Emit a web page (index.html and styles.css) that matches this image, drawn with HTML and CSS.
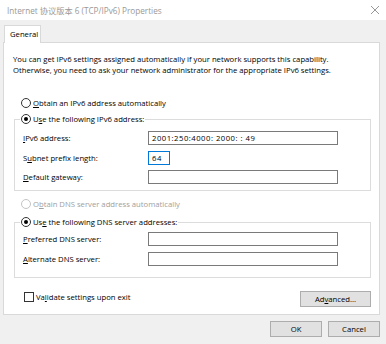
FILE: index.html
```html
<!DOCTYPE html>
<html lang="en">
<head>
  <meta charset="UTF-8" />
  <title>Internet 协议版本 6 (TCP/IPv6) Properties</title>
  <link rel="stylesheet" href="styles.css">
</head>
<body>
  <div class="window">
    <div class="titlebar">
      <span class="title">Internet 协议版本 6 (TCP/IPv6) Properties</span>
      <svg class="close" width="10" height="10" viewBox="0 0 10 10">
        <path d="M1 1 L9 9 M9 1 L1 9" stroke="#8c8c8c" stroke-width="0.9" fill="none"/>
      </svg>
    </div>

    <div class="tabs">
      <div class="tab">General</div>
    </div>

    <div class="pane">
      <p class="intro">
        You can get IPv6 settings assigned automatically if your network supports this capability.<br>
        Otherwise, you need to ask your network administrator for the appropriate IPv6 settings.
      </p>

      <label class="radio first"><span class="circle"></span><span><u>O</u>btain an IPv6 address automatically</span></label>

      <fieldset class="group">
        <legend><label class="radio"><span class="circle on"></span><span>U<u>s</u>e the following IPv6 address:</span></label></legend>
        <div class="row">
          <span class="lbl"><u>I</u>Pv6 address:</span>
          <input class="field" type="text" value="2001:250:4000: 2000: : 49">
        </div>
        <div class="row">
          <span class="lbl">S<u>u</u>bnet prefix length:</span>
          <input class="field short focus" type="text" value="64">
        </div>
        <div class="row">
          <span class="lbl"><u>D</u>efault gateway:</span>
          <input class="field" type="text" value="">
        </div>
      </fieldset>

      <label class="radio disabled second"><span class="circle"></span><span>O<u>b</u>tain DNS server address automatically</span></label>

      <fieldset class="group dns">
        <legend><label class="radio"><span class="circle on"></span><span>Us<u>e</u> the following DNS server addresses:</span></label></legend>
        <div class="row">
          <span class="lbl"><u>P</u>referred DNS server:</span>
          <input class="field" type="text" value="">
        </div>
        <div class="row">
          <span class="lbl"><u>A</u>lternate DNS server:</span>
          <input class="field" type="text" value="">
        </div>
      </fieldset>

      <div class="bottom">
        <label class="check"><span class="box"></span><span>Va<u>l</u>idate settings upon exit</span></label>
        <button class="btn advanced">Ad<u>v</u>anced...</button>
      </div>
    </div>

    <div class="actions">
      <button class="btn">OK</button>
      <button class="btn">Cancel</button>
    </div>
  </div>
</body>
</html>
```

FILE: styles.css
```css
body {
  margin: 0;
  font-family: "Open Sans", "Noto Sans CJK SC", sans-serif;
  font-size: 7.7px;
  color: #000;
  background: #f0f0f0;
}

.window {
  width: 386px;
  height: 344px;
  background: #f0f0f0;
  overflow: hidden;
}

.titlebar {
  height: 20px;
  background: #fff;
  display: flex;
  align-items: center;
  justify-content: space-between;
  padding: 0 6px 0 7px;
}

.title {
  color: #999;
  font-size: 8.2px;
}

.tabs {
  display: flex;
  padding: 5px 0 0 4px;
  height: 17px;
}

.tab {
  width: 37px;
  height: 18px;
  box-sizing: border-box;
  background: #fff;
  border: 1px solid #d9d9d9;
  border-bottom: none;
  padding: 3px 0 0 5px;
  position: relative;
  z-index: 1;
}

.pane {
  margin: 0 6px 0 3px;
  height: 273px;
  box-sizing: border-box;
  background: #fff;
  border: 1px solid #d9d9d9;
  padding: 11px 8px 0 10px;
}

.intro {
  margin: 0 0 21px -1px;
  line-height: 11px;
}

.radio {
  display: flex;
  align-items: center;
  gap: 2px;
  height: 12px;
}

.radio.first {
  margin-left: 7px;
  margin-bottom: 4px;
}

.radio.second {
  margin: 7px 0 6px 7px;
}

.circle {
  width: 8px;
  height: 8px;
  border: 1px solid #333;
  border-radius: 50%;
  display: flex;
  align-items: center;
  justify-content: center;
}

.circle.on::after {
  content: "";
  width: 4px;
  height: 4px;
  border-radius: 50%;
  background: #000;
}

.disabled {
  color: #a0a0a0;
}

.disabled .circle {
  border-color: #c4c4c4;
}

.group {
  margin: 0;
  border: 1px solid #dcdcdc;
  padding: 6px 0 6px 8px;
}

.group legend {
  padding: 0 1px;
  margin-left: -3px;
}

.group.dns {
  padding-top: 4px;
  padding-bottom: 5px;
}

.row {
  display: flex;
  align-items: center;
  height: 14px;
  margin-bottom: 5.5px;
}

.row:last-child {
  margin-bottom: 0;
}

.dns .row {
  margin-bottom: 6px;
}

.lbl {
  width: 125px;
}

.field {
  width: 190px;
  height: 14px;
  box-sizing: border-box;
  border: 1px solid #7a7a7a;
  padding: 0 3px;
  margin: 0;
  font-family: inherit;
  font-size: 7.7px;
  letter-spacing: 0.5px;
  color: #000;
  outline: none;
}

.field.short {
  width: 22px;
}

.field.focus {
  border-color: #0078d7;
}

.bottom {
  display: flex;
  justify-content: space-between;
  align-items: flex-start;
  margin-top: 13px;
}

.check {
  display: flex;
  align-items: center;
  gap: 2px;
  margin-left: 10px;
  height: 11px;
}

.box {
  width: 8px;
  height: 8px;
  border: 1px solid #333;
}

.btn {
  height: 16px;
  box-sizing: border-box;
  background: #e1e1e1;
  border: 1px solid #adadad;
  font-family: inherit;
  font-size: 7.7px;
  color: #000;
  padding: 0;
}

.advanced {
  width: 71px;
}

.actions {
  display: flex;
  justify-content: flex-end;
  gap: 6px;
  padding: 6px 6px 0 0;
}

.actions .btn {
  width: 52px;
}
```
